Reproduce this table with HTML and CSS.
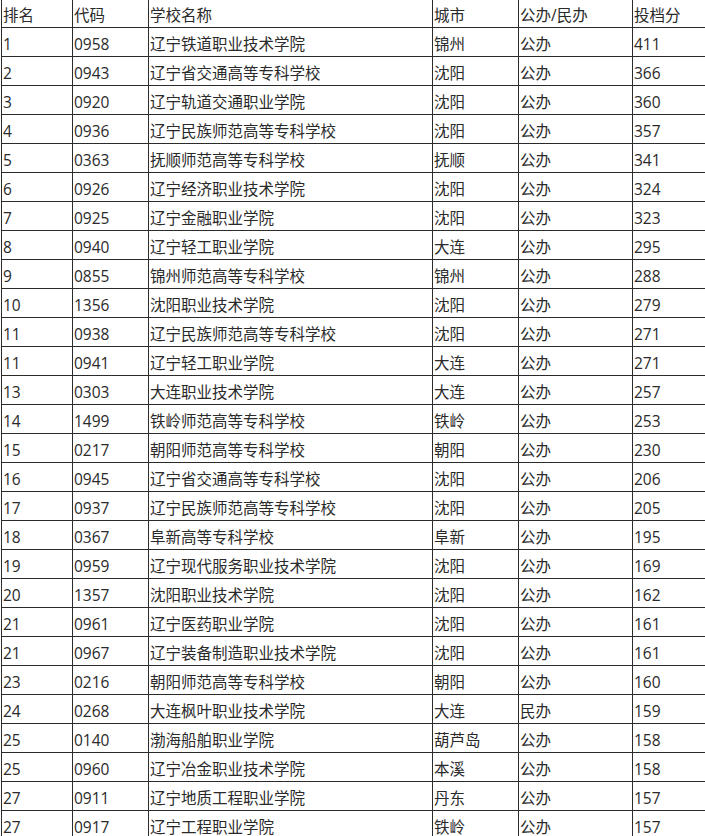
FILE: index.html
```html
<!DOCTYPE html>
<html lang="zh-CN">
<head>
<meta charset="utf-8">
<title>排名</title>
<link rel="stylesheet" href="styles.css">
</head>
<body>
<table class="rank">
<colgroup>
<col class="c1"><col class="c2"><col class="c3"><col class="c4"><col class="c5"><col class="c6">
</colgroup>
<tbody>
<tr><td>排名</td><td>代码</td><td>学校名称</td><td>城市</td><td>公办/民办</td><td>投档分</td></tr>
<tr><td>1</td><td>0958</td><td>辽宁铁道职业技术学院</td><td>锦州</td><td>公办</td><td>411</td></tr>
<tr><td>2</td><td>0943</td><td>辽宁省交通高等专科学校</td><td>沈阳</td><td>公办</td><td>366</td></tr>
<tr><td>3</td><td>0920</td><td>辽宁轨道交通职业学院</td><td>沈阳</td><td>公办</td><td>360</td></tr>
<tr><td>4</td><td>0936</td><td>辽宁民族师范高等专科学校</td><td>沈阳</td><td>公办</td><td>357</td></tr>
<tr><td>5</td><td>0363</td><td>抚顺师范高等专科学校</td><td>抚顺</td><td>公办</td><td>341</td></tr>
<tr><td>6</td><td>0926</td><td>辽宁经济职业技术学院</td><td>沈阳</td><td>公办</td><td>324</td></tr>
<tr><td>7</td><td>0925</td><td>辽宁金融职业学院</td><td>沈阳</td><td>公办</td><td>323</td></tr>
<tr><td>8</td><td>0940</td><td>辽宁轻工职业学院</td><td>大连</td><td>公办</td><td>295</td></tr>
<tr><td>9</td><td>0855</td><td>锦州师范高等专科学校</td><td>锦州</td><td>公办</td><td>288</td></tr>
<tr><td>10</td><td>1356</td><td>沈阳职业技术学院</td><td>沈阳</td><td>公办</td><td>279</td></tr>
<tr><td>11</td><td>0938</td><td>辽宁民族师范高等专科学校</td><td>沈阳</td><td>公办</td><td>271</td></tr>
<tr><td>11</td><td>0941</td><td>辽宁轻工职业学院</td><td>大连</td><td>公办</td><td>271</td></tr>
<tr><td>13</td><td>0303</td><td>大连职业技术学院</td><td>大连</td><td>公办</td><td>257</td></tr>
<tr><td>14</td><td>1499</td><td>铁岭师范高等专科学校</td><td>铁岭</td><td>公办</td><td>253</td></tr>
<tr><td>15</td><td>0217</td><td>朝阳师范高等专科学校</td><td>朝阳</td><td>公办</td><td>230</td></tr>
<tr><td>16</td><td>0945</td><td>辽宁省交通高等专科学校</td><td>沈阳</td><td>公办</td><td>206</td></tr>
<tr><td>17</td><td>0937</td><td>辽宁民族师范高等专科学校</td><td>沈阳</td><td>公办</td><td>205</td></tr>
<tr><td>18</td><td>0367</td><td>阜新高等专科学校</td><td>阜新</td><td>公办</td><td>195</td></tr>
<tr><td>19</td><td>0959</td><td>辽宁现代服务职业技术学院</td><td>沈阳</td><td>公办</td><td>169</td></tr>
<tr><td>20</td><td>1357</td><td>沈阳职业技术学院</td><td>沈阳</td><td>公办</td><td>162</td></tr>
<tr><td>21</td><td>0961</td><td>辽宁医药职业学院</td><td>沈阳</td><td>公办</td><td>161</td></tr>
<tr><td>21</td><td>0967</td><td>辽宁装备制造职业技术学院</td><td>沈阳</td><td>公办</td><td>161</td></tr>
<tr><td>23</td><td>0216</td><td>朝阳师范高等专科学校</td><td>朝阳</td><td>公办</td><td>160</td></tr>
<tr><td>24</td><td>0268</td><td>大连枫叶职业技术学院</td><td>大连</td><td>民办</td><td>159</td></tr>
<tr><td>25</td><td>0140</td><td>渤海船舶职业学院</td><td>葫芦岛</td><td>公办</td><td>158</td></tr>
<tr><td>25</td><td>0960</td><td>辽宁冶金职业技术学院</td><td>本溪</td><td>公办</td><td>158</td></tr>
<tr><td>27</td><td>0911</td><td>辽宁地质工程职业学院</td><td>丹东</td><td>公办</td><td>157</td></tr>
<tr><td>27</td><td>0917</td><td>辽宁工程职业学院</td><td>铁岭</td><td>公办</td><td>157</td></tr>
</tbody>
</table>
</body>
</html>
```
FILE: styles.css
```css
html, body {
  margin: 0;
  padding: 0;
  background: #fff;
  overflow: hidden;
}
body {
  font-family: "Open Sans", "Noto Sans CJK SC", sans-serif;
  font-size: 15.5px;
  color: #2a2a2a;
}
.rank {
  border-collapse: collapse;
  table-layout: fixed;
  width: 721px;
  margin: -2px 0 0 1px;
}
.c1 { width: 71px; }
.c2 { width: 76px; }
.c3 { width: 284px; }
.c4 { width: 86px; }
.c5 { width: 114px; }
.c6 { width: 90px; }
.rank td {
  border: 1px solid #2b2b2b;
  height: 29px;
  padding: 3px 1px 0;
  line-height: 20px;
  vertical-align: middle;
  white-space: nowrap;
  box-sizing: border-box;
}
```
